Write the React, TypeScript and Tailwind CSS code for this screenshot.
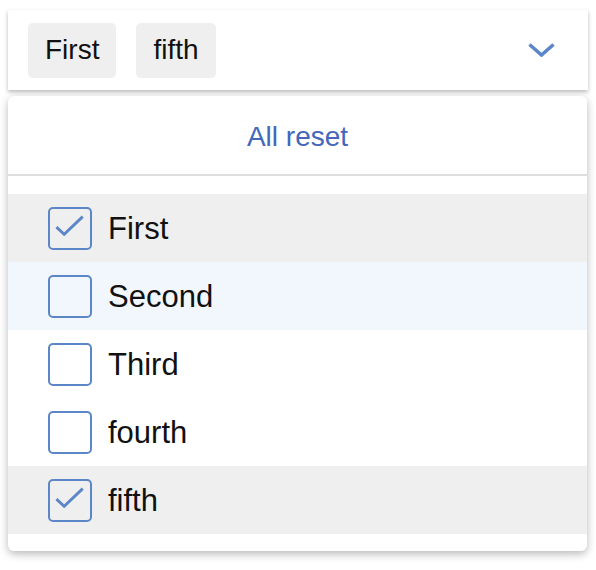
import { useState } from "react";

const options = ["First", "Second", "Third", "fourth", "fifth"];

function CheckIcon() {
    return (
        <svg viewBox="0 0 24 24" className="w-[44px] h-[43px]" fill="none" stroke="#5b87c9" strokeWidth="1.75" strokeLinecap="square" strokeLinejoin="miter">
            <path d="M4.5 11.8 L8.5 15.5 L19 5.5" />
        </svg>
    );
}

export default function App() {
    const [selected, setSelected] = useState<string[]>(["First", "fifth"]);
    const hovered = "Second";

    const toggle = (name: string) =>
        setSelected((s) => (s.includes(name) ? s.filter((x) => x !== name) : [...s, name]));

    return (
        <div className="w-[596px] h-[570px] bg-white pt-[10px] px-2 font-['Liberation_Sans',Arial,sans-serif]">
            <div className="w-[580px] h-[80px] bg-white flex items-center pl-5 pr-[33px] gap-5 shadow-[0_2px_4px_rgba(0,0,0,0.28)]">
                {options
                    .filter((o) => selected.includes(o))
                    .map((o) => (
                        <span key={o} className="h-[55px] px-[17px] flex items-center rounded-[5px] bg-[#efefef] text-[28px] text-[#111]">
                            {o}
                        </span>
                    ))}
                <svg viewBox="0 0 27 14" className="ml-auto w-[27px] h-[14px]" fill="none" stroke="#5b87c9" strokeWidth="3.6">
                    <path d="M1.5 1.5 L13.5 12 L25.5 1.5" />
                </svg>
            </div>

            <div className="mt-[6px] w-[579px] bg-white rounded-md shadow-[0_3px_8px_rgba(0,0,0,0.28)] pb-[17px]">
                <button
                    onClick={() => setSelected([])}
                    className="w-full h-[78px] flex items-center justify-center pt-1 text-[28px] text-[#4466bb]"
                >
                    All reset
                </button>
                <div className="h-[2px] bg-[#dedede]" />
                <div className="h-[18px]" />
                {options.map((o) => {
                    const checked = selected.includes(o);
                    return (
                        <div
                            key={o}
                            onClick={() => toggle(o)}
                            className={
                                "h-[68px] flex items-center pl-10 gap-4 cursor-pointer " +
                                (checked ? "bg-[#efefef]" : o === hovered ? "bg-[#f2f7fd]" : "bg-white")
                            }
                        >
                            <span className="w-[44px] h-[43px] rounded-[5px] border-2 border-[#5b87c9] flex items-center justify-center overflow-hidden">
                                {checked && <CheckIcon />}
                            </span>
                            <span className="text-[31px] text-[#111] pt-[3px]">{o}</span>
                        </div>
                    );
                })}
            </div>
        </div>
    );
}
